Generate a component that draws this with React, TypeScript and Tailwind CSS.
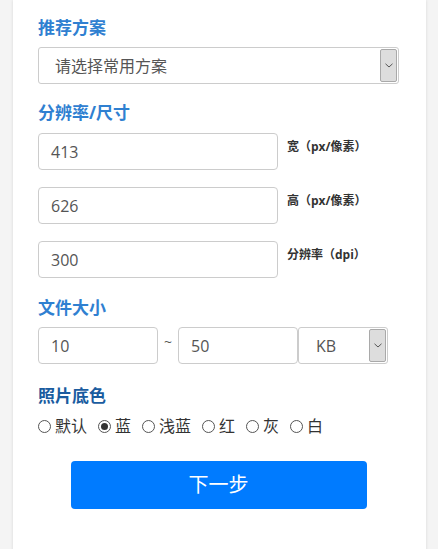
import React from "react";

const font = { fontFamily: '"Open Sans", "Noto Sans CJK SC", sans-serif' };

function Chevron() {
  return (
    <svg width="8" height="5" viewBox="0 0 8 5" fill="none">
      <path d="M0.5 0.8 L4 4 L7.5 0.8" stroke="#555" strokeWidth="1" />
    </svg>
  );
}

function SelectBox({ text, width, padLeft }: { text: string; width: string; padLeft: string }) {
  return (
    <div className={`${width} h-[37px] flex border border-[#cccccc] rounded-[3px] bg-white overflow-hidden`}>
      <div className={`flex-1 flex items-center ${padLeft} text-[16px] text-[#555555]`}>{text}</div>
      <div className="w-[17px] my-[1px] mr-[1px] bg-[#dddddd] border border-[#a9a9a9] rounded-[2px] flex items-center justify-center">
        <Chevron />
      </div>
    </div>
  );
}

function Input({ value, width, pl }: { value: string; width: string; pl: string }) {
  return (
    <div className={`${width} h-[37px] border border-[#cccccc] rounded-[4px] bg-white flex items-center ${pl} text-[16px] text-[#555555]`}>
      {value}
    </div>
  );
}

function Radio({ label, checked }: { label: string; checked?: boolean }) {
  return (
    <div className="flex items-center gap-[4px]">
      <span className="w-[13px] h-[13px] rounded-full border border-[#555555] flex items-center justify-center bg-white">
        {checked && <span className="w-[7px] h-[7px] rounded-full bg-[#333333]" />}
      </span>
      <span className="text-[16px] text-[#333333]">{label}</span>
    </div>
  );
}

export default function App() {
  return (
    <div className="w-[438px] h-[549px] bg-[#f4f4f4] overflow-hidden" style={font}>
      <div className="ml-[13px] w-[413px] h-[600px] bg-white shadow-[0_0_3px_rgba(0,0,0,0.12)] pl-[25px] pr-[27px] pt-[16px]">
        <div className="h-[24px] leading-[24px] text-[17px] font-bold text-[#2f80d1]">推荐方案</div>
        <div className="mt-[7px]">
          <SelectBox text="请选择常用方案" width="w-[361px]" padLeft="pl-[16px]" />
        </div>

        <div className="mt-[17px] h-[24px] leading-[24px] text-[17px] font-bold text-[#2f80d1]">分辨率/尺寸</div>
        <div className="mt-[8px] flex flex-col gap-[17px]">
          {[
            ["413", "宽（px/像素）"],
            ["626", "高（px/像素）"],
            ["300", "分辨率（dpi）"],
          ].map(([v, l]) => (
            <div key={v} className="flex items-start">
              <Input value={v} width="w-[240px]" pl="pl-[12px]" />
              <div className="ml-[9px] pt-[5px] text-[12px] font-bold text-[#333333]">{l}</div>
            </div>
          ))}
        </div>

        <div className="mt-[18px] h-[24px] leading-[24px] text-[17px] font-bold text-[#2f80d1]">文件大小</div>
        <div className="mt-[7px] flex items-start">
          <Input value="10" width="w-[120px]" pl="pl-[12px]" />
          <div className="w-[20px] text-center text-[14px] leading-[14px] pt-[8px] text-[#555555]">~</div>
          <Input value="50" width="w-[120px]" pl="pl-[12px]" />
          <SelectBox text="KB" width="w-[90px]" padLeft="pl-[17px]" />
        </div>

        <div className="mt-[20px] h-[24px] leading-[24px] text-[17px] font-bold text-[#1a5c9f]">照片底色</div>
        <div className="mt-[6px] h-[24px] flex items-center gap-[11px]">
          <Radio label="默认" />
          <Radio label="蓝" checked />
          <Radio label="浅蓝" />
          <Radio label="红" />
          <Radio label="灰" />
          <Radio label="白" />
        </div>

        <div className="mt-[23px] flex justify-center">
          <button className="w-[296px] h-[48px] rounded-[4px] bg-[#007bff] text-white text-[20px]">下一步</button>
        </div>
      </div>
    </div>
  );
}
